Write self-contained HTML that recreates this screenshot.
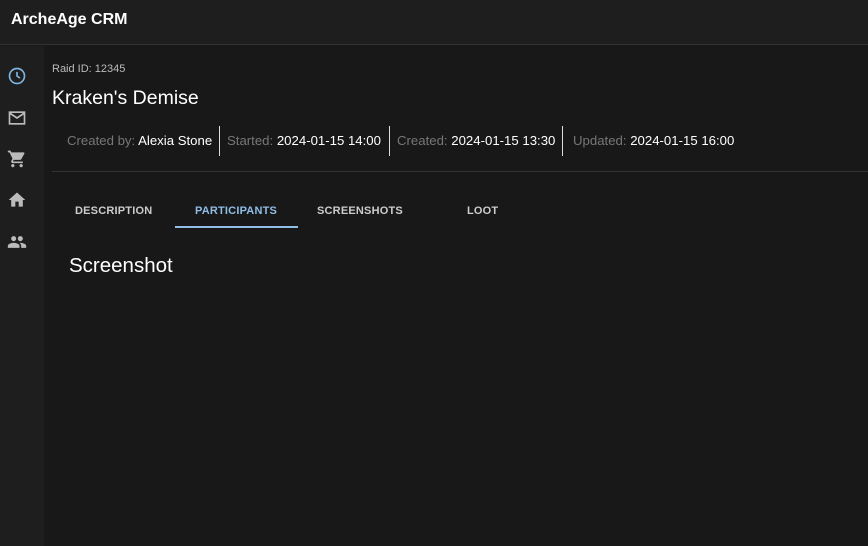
<!DOCTYPE html>
<html><head><style>
*{margin:0;padding:0;box-sizing:border-box}
body{width:868px;height:546px;background:#181818;font-family:"Liberation Sans",Roboto,sans-serif;color:#fff;position:relative;overflow:hidden}
.bar{position:absolute;left:0;top:0;width:868px;height:45px;background:#1e1e1e;border-bottom:1px solid #333}
.bar span{position:absolute;left:11px;top:11px;font-size:16px;font-weight:bold}
.side{position:absolute;left:0;top:46px;width:44px;height:500px;background:#1e1e1e}
.side svg{position:absolute;left:7px;width:20px;height:20px}
.t{position:absolute;white-space:nowrap}
.g{color:#777}
.vl{position:absolute;top:126px;width:1px;height:30px;background:#ddd}
.tab{position:absolute;top:205px;font-size:11px;font-weight:bold;letter-spacing:.2px;color:#ccc}
</style></head><body>
<div class="bar"><span>ArcheAge CRM</span></div>
<div class="side">
<svg style="top:20px" viewBox="0 0 24 24"><circle cx="12" cy="12" r="9" fill="none" stroke="#7fb3e0" stroke-width="2"/><path d="M12 7v5l3.5 2.5" fill="none" stroke="#7fb3e0" stroke-width="2"/></svg>
<svg style="top:62px" viewBox="0 0 24 24"><rect x="3" y="5" width="18" height="14" fill="none" stroke="#bbb" stroke-width="2"/><path d="M3 6l9 6 9-6" fill="none" stroke="#bbb" stroke-width="2"/></svg>
<svg style="top:103px" viewBox="0 0 24 24"><path fill="#bbb" d="M7 18c-1.1 0-2 .9-2 2s.9 2 2 2 2-.9 2-2-.9-2-2-2zM1 2v2h2l3.6 7.59-1.35 2.45C4.52 15.37 5.48 17 7 17h12v-2H7.42c-.14 0-.25-.11-.25-.25l.9-1.75h7.45c.75 0 1.41-.41 1.750-1.03l3.58-6.49A1 1 0 0 0 20 4H5.21l-.94-2H1zm16 16c-1.1 0-2 .9-2 2s.9 2 2 2 2-.9 2-2-.9-2-2-2z"/></svg>
<svg style="top:144px" viewBox="0 0 24 24"><path fill="#bbb" d="M10 20v-6h4v6h5v-8h3L12 3 2 12h3v8z"/></svg>
<svg style="top:186px" viewBox="0 0 24 24"><path fill="#bbb" d="M16 11c1.66 0 2.99-1.34 2.99-3S17.66 5 16 5s-3 1.34-3 3 1.34 3 3 3zm-8 0c1.66 0 2.99-1.34 2.99-3S9.66 5 8 5 5 6.34 5 8s1.34 3 3 3zm0 2c-2.330 0-7 1.17-7 3.5V19h14v-2.5c0-2.33-4.67-3.5-7-3.5zm8 0c-.29 0-.62.02-.97.05 1.16.84 1.97 1.97 1.97 3.45V19h6v-2.5c0-2.33-4.67-3.5-7-3.5z"/></svg>
</div>
<div class="t" style="left:52px;top:63px;font-size:11px;color:#bbb">Raid ID: 12345</div>
<div class="t" style="left:52px;top:87px;font-size:19.5px">Kraken's Demise</div>
<div class="t" style="left:67px;top:133px;font-size:13.2px"><span class="g">Created by:</span> Alexia Stone</div>
<div class="vl" style="left:219px"></div>
<div class="t" style="left:227px;top:133px;font-size:13.2px"><span class="g">Started:</span> 2024-01-15 14:00</div>
<div class="vl" style="left:389px"></div>
<div class="t" style="left:397px;top:133px;font-size:13.2px"><span class="g">Created:</span> 2024-01-15 13:30</div>
<div class="vl" style="left:562px"></div>
<div class="t" style="left:573px;top:133px;font-size:13.2px"><span class="g">Updated:</span> 2024-01-15 16:00</div>
<div style="position:absolute;left:52px;top:171px;width:816px;height:1px;background:#333"></div>
<div class="tab" style="left:75px">DESCRIPTION</div>
<div class="tab" style="left:195px;color:#8fbde6">PARTICIPANTS</div>
<div class="tab" style="left:317px">SCREENSHOTS</div>
<div class="tab" style="left:467px">LOOT</div>
<div style="position:absolute;left:175px;top:226px;width:123px;height:2px;background:#8fbde6"></div>
<div class="t" style="left:69px;top:254px;font-size:20.5px">Screenshot</div>
</body></html>
